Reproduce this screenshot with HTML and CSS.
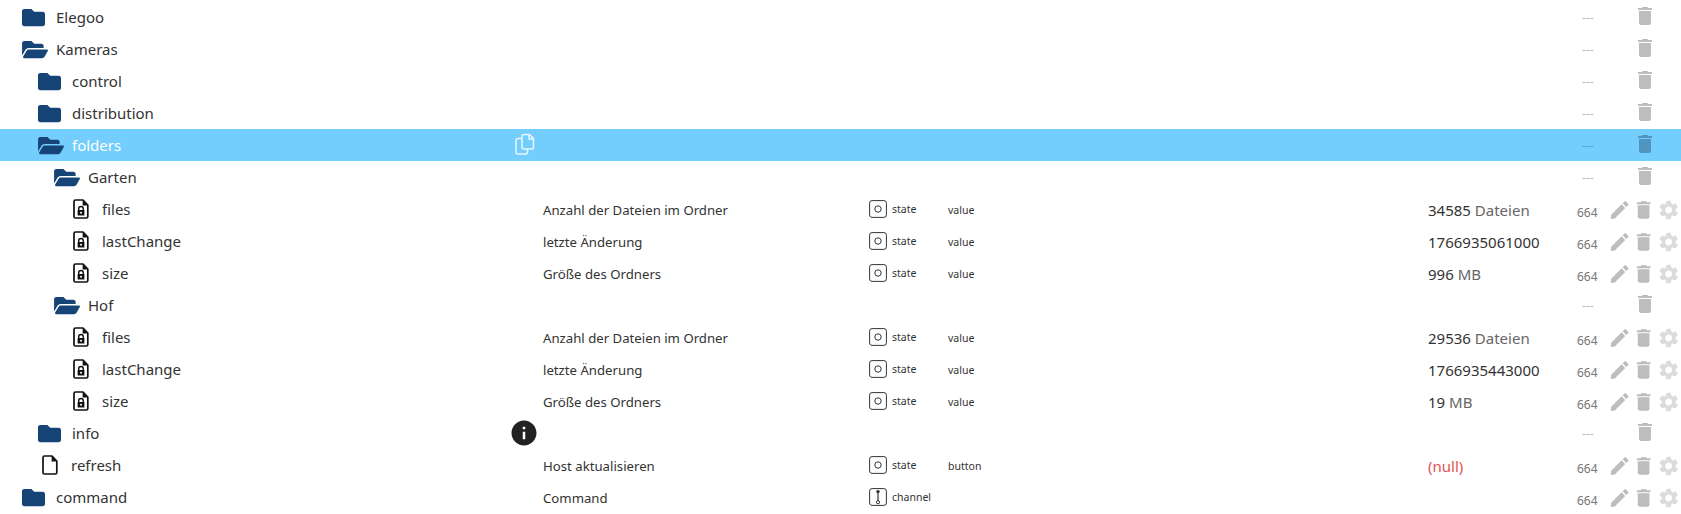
FILE: index.html
```html
<!DOCTYPE html>
<html lang="en">
<head>
    <meta charset="UTF-8">
    <meta name="viewport" content="width=device-width, initial-scale=1.0">
    <title>Objects</title>
    <link rel="stylesheet" href="styles.css">
</head>
<body>
    <svg class="defs">
        <symbol id="i-folder" viewBox="0 0 512 512"><path d="M464 128H272l-64-64H48C21.49 64 0 85.49 0 112v288c0 26.51 21.49 48 48 48h416c26.51 0 48-21.49 48-48V176c0-26.51-21.49-48-48-48z"/></symbol>
        <symbol id="i-open" viewBox="0 0 576 512"><path d="M572.694 292.093L500.27 416.248A63.997 63.997 0 0 1 444.989 448H45.025c-18.523 0-30.064-20.093-20.731-36.093l72.424-124.155A64 64 0 0 1 152 256h399.964c18.523 0 30.064 20.093 20.73 36.093zM152 224h328v-48c0-26.51-21.49-48-48-48H272l-64-64H48C21.49 64 0 85.49 0 112v278.046l69.077-118.418C86.214 242.25 117.989 224 152 224z"/></symbol>
        <symbol id="i-file" viewBox="0 0 16 20"><path d="M2.5 1H10l4.8 5v11.5a1.5 1.5 0 0 1-1.5 1.5H2.5A1.5 1.5 0 0 1 1 17.5v-15A1.5 1.5 0 0 1 2.5 1z" fill="none" stroke="currentColor" stroke-width="1.7" stroke-linejoin="round"/><path d="M9.6 1v5.4h5.2z"/></symbol>
        <symbol id="i-lock" viewBox="0 0 16 20"><path d="M2.5 1H10l4.8 5v11.5a1.5 1.5 0 0 1-1.5 1.5H2.5A1.5 1.5 0 0 1 1 17.5v-15A1.5 1.5 0 0 1 2.5 1z" fill="none" stroke="currentColor" stroke-width="1.7" stroke-linejoin="round"/><path d="M9.6 1v5.4h5.2z"/><path fill-rule="evenodd" d="M5 11V9.8a3 3 0 0 1 6 0V11h.4v5.4H4.6V11zm1.4 0h3.2V9.8a1.6 1.6 0 0 0-3.2 0zM8 12.7a1 1 0 1 0 0 2 1 1 0 0 0 0-2z"/></symbol>
        <symbol id="i-state" viewBox="0 0 18 18"><rect x=".6" y=".6" width="16.8" height="16.8" rx="2.5" fill="none" stroke="currentColor" stroke-width="1"/><circle cx="9" cy="9" r="3.2" fill="none" stroke="currentColor" stroke-width="1"/></symbol>
        <symbol id="i-channel" viewBox="0 0 18 18"><rect x=".6" y=".6" width="16.8" height="16.8" rx="2.5" fill="none" stroke="currentColor" stroke-width="1"/><circle cx="9" cy="3.6" r="1.7" fill="currentColor"/><path d="M9 5v8" stroke="currentColor" stroke-width="1.2"/><circle cx="9" cy="14.2" r="1.6" fill="none" stroke="currentColor" stroke-width="1"/></symbol>
        <symbol id="i-edit" viewBox="0 0 24 24"><path d="M3 17.25V21h3.75L17.81 9.94l-3.75-3.75L3 17.25zM20.71 7.04c.39-.39.39-1.02 0-1.41l-2.34-2.34c-.39-.39-1.02-.39-1.41 0l-1.83 1.83 3.75 3.75 1.83-1.83z"/></symbol>
        <symbol id="i-trash" viewBox="0 0 24 24"><path d="M6 19c0 1.1.9 2 2 2h8c1.1 0 2-.9 2-2V7H6v12zM19 4h-3.5l-1-1h-5l-1 1H5v2h14V4z"/></symbol>
        <symbol id="i-gear" viewBox="0 0 24 24"><path d="M19.14 12.94c.04-.3.06-.61.06-.94 0-.32-.02-.64-.07-.94l2.03-1.58c.18-.14.23-.41.12-.61l-1.92-3.32c-.12-.22-.37-.29-.59-.22l-2.39.96c-.5-.38-1.03-.7-1.62-.94l-.36-2.54c-.04-.24-.24-.41-.48-.41h-3.84c-.24 0-.43.17-.47.41l-.36 2.54c-.59.24-1.13.57-1.62.94l-2.39-.96c-.22-.08-.47 0-.59.22L2.74 8.87c-.12.21-.08.47.12.61l2.03 1.58c-.05.3-.09.63-.09.94s.02.64.07.94l-2.03 1.58c-.18.14-.23.41-.12.61l1.92 3.32c.12.22.37.29.59.22l2.39-.96c.5.38 1.03.7 1.62.94l.36 2.54c.05.24.24.41.48.41h3.84c.24 0 .44-.17.47-.41l.36-2.54c.59-.24 1.13-.56 1.62-.94l2.39.96c.22.08.47 0 .59-.22l1.92-3.32c.12-.22.07-.47-.12-.61l-2.01-1.58zM12 15.6c-1.98 0-3.6-1.62-3.6-3.6s1.62-3.6 3.6-3.6 3.6 1.62 3.6 3.6-1.62 3.6-3.6 3.6z"/></symbol>
        <symbol id="i-info" viewBox="0 0 24 24"><path d="M12 2C6.48 2 2 6.48 2 12s4.48 10 10 10 10-4.48 10-10S17.52 2 12 2zm1 15h-2v-6h2v6zm0-8h-2V7h2v2z"/></symbol>
        <symbol id="i-copy" viewBox="0 0 20 22"><path d="M9 1.5h5.5l4 4v9a1.5 1.5 0 0 1-1.5 1.5H8.5A1.5 1.5 0 0 1 7 14.500v-11a2 2 0 0 1 2-2zM14 1.500v4.500h4.500M7 5.500H3a2 2 0 0 0-2 2v11.500a2 2 0 0 0 2 2h7.500a2 2 0 0 0 2-2v-3" fill="none" stroke="currentColor" stroke-width="1.500" stroke-linejoin="round"/></symbol>
    </svg>

    <div class="tree">
        <div class="row">
            <div class="name lvl-0"><svg class="ico folder"><use href="#i-folder"/></svg>Elegoo</div>
            <div class="hover"></div><div class="desc"></div><div class="role"></div><div class="type"></div><div class="value"></div>
            <div class="rights dash">---</div>
            <div class="actions top"><span class="slot"></span><svg class="act"><use href="#i-trash"/></svg></div>
        </div>
        <div class="row">
            <div class="name lvl-0"><svg class="ico folder open"><use href="#i-open"/></svg>Kameras</div>
            <div class="hover"></div><div class="desc"></div><div class="role"></div><div class="type"></div><div class="value"></div>
            <div class="rights dash">---</div>
            <div class="actions top"><span class="slot"></span><svg class="act"><use href="#i-trash"/></svg></div>
        </div>
        <div class="row">
            <div class="name lvl-1"><svg class="ico folder"><use href="#i-folder"/></svg>control</div>
            <div class="hover"></div><div class="desc"></div><div class="role"></div><div class="type"></div><div class="value"></div>
            <div class="rights dash">---</div>
            <div class="actions top"><span class="slot"></span><svg class="act"><use href="#i-trash"/></svg></div>
        </div>
        <div class="row">
            <div class="name lvl-1"><svg class="ico folder"><use href="#i-folder"/></svg>distribution</div>
            <div class="hover"></div><div class="desc"></div><div class="role"></div><div class="type"></div><div class="value"></div>
            <div class="rights dash">---</div>
            <div class="actions top"><span class="slot"></span><svg class="act"><use href="#i-trash"/></svg></div>
        </div>
        <div class="row selected">
            <div class="name lvl-1"><svg class="ico folder open"><use href="#i-open"/></svg>folders</div>
            <div class="hover"><svg class="copy"><use href="#i-copy"/></svg></div><div class="desc"></div><div class="role"></div><div class="type"></div><div class="value"></div>
            <div class="rights dash">---</div>
            <div class="actions top"><span class="slot"></span><svg class="act"><use href="#i-trash"/></svg></div>
        </div>
        <div class="row">
            <div class="name lvl-2"><svg class="ico folder open"><use href="#i-open"/></svg>Garten</div>
            <div class="hover"></div><div class="desc"></div><div class="role"></div><div class="type"></div><div class="value"></div>
            <div class="rights dash">---</div>
            <div class="actions top"><span class="slot"></span><svg class="act"><use href="#i-trash"/></svg></div>
        </div>
        <div class="row">
            <div class="name lvl-3"><svg class="ico doc"><use href="#i-lock"/></svg>files</div>
            <div class="hover"></div><div class="desc">Anzahl der Dateien im Ordner</div>
            <div class="role"><svg class="role-ico"><use href="#i-state"/></svg>state</div><div class="type">value</div>
            <div class="value">34585 <span class="unit">Dateien</span></div>
            <div class="rights">664</div>
            <div class="actions"><svg class="act"><use href="#i-edit"/></svg><svg class="act"><use href="#i-trash"/></svg><svg class="act gear"><use href="#i-gear"/></svg></div>
        </div>
        <div class="row">
            <div class="name lvl-3"><svg class="ico doc"><use href="#i-lock"/></svg>lastChange</div>
            <div class="hover"></div><div class="desc">letzte Änderung</div>
            <div class="role"><svg class="role-ico"><use href="#i-state"/></svg>state</div><div class="type">value</div>
            <div class="value">1766935061000</div>
            <div class="rights">664</div>
            <div class="actions"><svg class="act"><use href="#i-edit"/></svg><svg class="act"><use href="#i-trash"/></svg><svg class="act gear"><use href="#i-gear"/></svg></div>
        </div>
        <div class="row">
            <div class="name lvl-3"><svg class="ico doc"><use href="#i-lock"/></svg>size</div>
            <div class="hover"></div><div class="desc">Größe des Ordners</div>
            <div class="role"><svg class="role-ico"><use href="#i-state"/></svg>state</div><div class="type">value</div>
            <div class="value">996 <span class="unit">MB</span></div>
            <div class="rights">664</div>
            <div class="actions"><svg class="act"><use href="#i-edit"/></svg><svg class="act"><use href="#i-trash"/></svg><svg class="act gear"><use href="#i-gear"/></svg></div>
        </div>
        <div class="row">
            <div class="name lvl-2"><svg class="ico folder open"><use href="#i-open"/></svg>Hof</div>
            <div class="hover"></div><div class="desc"></div><div class="role"></div><div class="type"></div><div class="value"></div>
            <div class="rights dash">---</div>
            <div class="actions top"><span class="slot"></span><svg class="act"><use href="#i-trash"/></svg></div>
        </div>
        <div class="row">
            <div class="name lvl-3"><svg class="ico doc"><use href="#i-lock"/></svg>files</div>
            <div class="hover"></div><div class="desc">Anzahl der Dateien im Ordner</div>
            <div class="role"><svg class="role-ico"><use href="#i-state"/></svg>state</div><div class="type">value</div>
            <div class="value">29536 <span class="unit">Dateien</span></div>
            <div class="rights">664</div>
            <div class="actions"><svg class="act"><use href="#i-edit"/></svg><svg class="act"><use href="#i-trash"/></svg><svg class="act gear"><use href="#i-gear"/></svg></div>
        </div>
        <div class="row">
            <div class="name lvl-3"><svg class="ico doc"><use href="#i-lock"/></svg>lastChange</div>
            <div class="hover"></div><div class="desc">letzte Änderung</div>
            <div class="role"><svg class="role-ico"><use href="#i-state"/></svg>state</div><div class="type">value</div>
            <div class="value">1766935443000</div>
            <div class="rights">664</div>
            <div class="actions"><svg class="act"><use href="#i-edit"/></svg><svg class="act"><use href="#i-trash"/></svg><svg class="act gear"><use href="#i-gear"/></svg></div>
        </div>
        <div class="row">
            <div class="name lvl-3"><svg class="ico doc"><use href="#i-lock"/></svg>size</div>
            <div class="hover"></div><div class="desc">Größe des Ordners</div>
            <div class="role"><svg class="role-ico"><use href="#i-state"/></svg>state</div><div class="type">value</div>
            <div class="value">19 <span class="unit">MB</span></div>
            <div class="rights">664</div>
            <div class="actions"><svg class="act"><use href="#i-edit"/></svg><svg class="act"><use href="#i-trash"/></svg><svg class="act gear"><use href="#i-gear"/></svg></div>
        </div>
        <div class="row">
            <div class="name lvl-1"><svg class="ico folder"><use href="#i-folder"/></svg>info</div>
            <div class="hover"><svg class="info"><use href="#i-info"/></svg></div><div class="desc"></div><div class="role"></div><div class="type"></div><div class="value"></div>
            <div class="rights dash">---</div>
            <div class="actions top"><span class="slot"></span><svg class="act"><use href="#i-trash"/></svg></div>
        </div>
        <div class="row">
            <div class="name lvl-1 plain"><svg class="ico doc"><use href="#i-file"/></svg>refresh</div>
            <div class="hover"></div><div class="desc">Host aktualisieren</div>
            <div class="role"><svg class="role-ico"><use href="#i-state"/></svg>state</div><div class="type">button</div>
            <div class="value null">(null)</div>
            <div class="rights">664</div>
            <div class="actions"><svg class="act"><use href="#i-edit"/></svg><svg class="act"><use href="#i-trash"/></svg><svg class="act gear"><use href="#i-gear"/></svg></div>
        </div>
        <div class="row">
            <div class="name lvl-0"><svg class="ico folder"><use href="#i-folder"/></svg>command</div>
            <div class="hover"></div><div class="desc">Command</div>
            <div class="role"><svg class="role-ico"><use href="#i-channel"/></svg>channel</div><div class="type"></div>
            <div class="value"></div>
            <div class="rights">664</div>
            <div class="actions"><svg class="act"><use href="#i-edit"/></svg><svg class="act"><use href="#i-trash"/></svg><svg class="act gear"><use href="#i-gear"/></svg></div>
        </div>
    </div>
</body>
</html>
```

FILE: styles.css
```css
html, body {
    margin: 0;
    background: #fff;
    overflow: hidden;
}
body {
    font-family: "Noto Sans", "Open Sans", sans-serif;
    color: #333;
    padding-top: 1px;
}
.defs {
    display: none;
}
.row {
    display: grid;
    grid-template-columns: 512px 31px 326px 79px 480px 149px 31px 72px;
    height: 32px;
    align-items: center;
}
.row.selected {
    background: #73cdfd;
    color: #fff;
}
.name {
    display: flex;
    align-items: center;
    font-size: 15px;
    line-height: 22px;
}
.lvl-0 { padding-left: 22px; }
.lvl-1 { padding-left: 38px; }
.lvl-2 { padding-left: 54px; }
.lvl-3 { padding-left: 73px; }
.lvl-1.plain { padding-left: 42px; }
.ico {
    flex: none;
    fill: #164477;
}
.folder {
    width: 23px;
    height: 23px;
    margin-right: 11px;
}
.folder.open {
    width: 26px;
    margin-right: 8px;
}
.doc {
    width: 16px;
    height: 20px;
    margin-right: 13px;
    fill: #111;
    color: #111;
}
.plain .doc {
    margin-right: 13px;
}
.copy {
    display: block;
    width: 20px;
    height: 22px;
    margin: 0 0 2px 3px;
    color: #e8f7ff;
}
.info {
    display: block;
    width: 30px;
    height: 30px;
    margin-left: -3px;
    fill: #222;
}
.desc {
    font-size: 13.2px;
    padding-top: 2px;
}
.role {
    display: flex;
    align-items: center;
    font-size: 10.5px;
}
.role-ico {
    width: 18px;
    height: 18px;
    margin-right: 5px;
    color: #333;
}
.type {
    font-size: 10.5px;
    padding-top: 1px;
}
.value {
    font-size: 15px;
    padding-top: 2px;
}
.unit {
    color: #666;
}
.null {
    color: #e05555;
}
.rights {
    font-size: 12px;
    color: #777;
    padding-top: 6px;
}
.dash {
    color: #bbb;
    padding: 0 0 0 5px;
}
.selected .dash {
    color: #5c9ec4;
}
.actions {
    display: flex;
    gap: 1px;
    height: 24px;
    margin-top: 2px;
}
.actions.top {
    margin-top: 0;
    margin-bottom: 2px;
}
.act {
    width: 24px;
    height: 24px;
    fill: #bdbdbd;
}
.slot {
    width: 24px;
}
.gear {
    fill: #dcdcdc;
}
.selected .act {
    fill: #4f95c0;
}
```
